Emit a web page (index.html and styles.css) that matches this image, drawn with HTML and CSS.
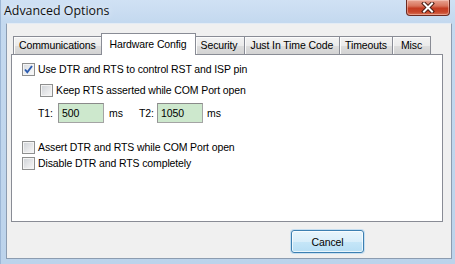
FILE: index.html
```html
<!DOCTYPE html>
<html>
<head>
<meta charset="utf-8">
<title>Advanced Options</title>
<link rel="stylesheet" href="styles.css">
</head>
<body>
<div class="window">
  <div class="titlebar">
    <span class="title">Advanced Options</span>
    <button class="close" aria-label="Close">
      <svg width="14" height="11" viewBox="0 0 14 11">
        <path d="M3 1.5 L11 9.5 M11 1.5 L3 9.5" stroke="#4a1d14" stroke-width="4" stroke-linecap="square"/>
        <path d="M3 1.5 L11 9.5 M11 1.5 L3 9.5" stroke="#ffffff" stroke-width="2" stroke-linecap="square"/>
      </svg>
    </button>
  </div>
  <div class="client">
    <div class="tabctl">
      <div class="tabs">
        <div class="tab first">Communications</div>
        <div class="tab active">Hardware Config</div>
        <div class="tab">Security</div>
        <div class="tab">Just In Time Code</div>
        <div class="tab narrow">Timeouts</div>
        <div class="tab last">Misc</div>
      </div>
      <div class="panel">
        <div class="row first">
          <span class="cb checked">
            <svg width="9" height="9" viewBox="0 0 9 9"><path d="M1 4.5 L3.3 7.2 L8 1" fill="none" stroke="#2c5cb0" stroke-width="1.9"/></svg>
          </span>
          <span>Use DTR and RTS to control RST and ISP pin</span>
        </div>
        <div class="row sub">
          <span class="cb"></span>
          <span>Keep RTS asserted while COM Port open</span>
        </div>
        <div class="trow">
          <span class="tlabel">T1:</span>
          <span class="field">500</span>
          <span class="unit">ms</span>
          <span class="tlabel t2">T2:</span>
          <span class="field f2">1050</span>
          <span class="unit u2">ms</span>
        </div>
        <div class="row assert">
          <span class="cb"></span>
          <span>Assert DTR and RTS while COM Port open</span>
        </div>
        <div class="row">
          <span class="cb"></span>
          <span>Disable DTR and RTS completely</span>
        </div>
      </div>
    </div>
    <div class="buttons">
      <button class="btn">Cancel</button>
    </div>
  </div>
</div>
</body>
</html>
```
FILE: styles.css
```css
html, body {
  margin: 0;
  padding: 0;
  background: #b9d1ea;
}

.window {
  width: 455px;
  height: 264px;
  box-sizing: border-box;
  display: flex;
  flex-direction: column;
  background: linear-gradient(180deg, #d0e1f4 0px, #c4d9ef 22px, #bcd3eb 100%);
  border-left: 1px solid #9db7d6;
  font-family: "Liberation Sans", Arial, sans-serif;
  font-size: 10.5px;
  letter-spacing: -0.12px;
  color: #000;
}

.titlebar {
  height: 23px;
  flex: none;
  display: flex;
  justify-content: space-between;
  align-items: flex-start;
}

.title {
  font-family: "Open Sans", "Noto Sans", sans-serif;
  font-size: 12.4px;
  letter-spacing: 0;
  line-height: 22px;
  padding-left: 3px;
  color: #111;
  text-shadow: 0 0 6px rgba(255, 255, 255, 0.9);
}

.close {
  width: 44px;
  height: 16px;
  margin: 0 5px 0 0;
  padding: 0;
  box-sizing: border-box;
  border: 1px solid #6b2a20;
  border-top: none;
  border-radius: 0 0 4px 4px;
  background: linear-gradient(180deg, #e8a493 0%, #d8735b 40%, #c43c22 55%, #c9472b 80%, #d9765a 100%);
  box-shadow: inset 0 0 0 1px rgba(255, 220, 210, 0.45);
  display: flex;
  align-items: center;
  justify-content: center;
}

.client {
  flex: 1;
  margin: 0 3px 5px 5px;
  background: #f0f0f0;
  border: 1px solid #8c9cb0;
  border-top-color: #e4ecf5;
  display: flex;
  flex-direction: column;
}

.tabctl {
  margin: 9px 8px 0 4px;
  display: flex;
  flex-direction: column;
}

.tabs {
  height: 21px;
  display: flex;
  align-items: flex-end;
  padding-left: 2px;
}

.tab {
  height: 18px;
  box-sizing: border-box;
  padding: 0 6px;
  line-height: 17px;
  border: 1px solid #898c95;
  border-bottom: none;
  border-right: none;
  background: linear-gradient(180deg, #f3f3f3 0%, #ebebeb 50%, #dddddd 51%, #d3d3d3 100%);
  box-shadow: inset 1px 1px 0 #fcfcfc;
  white-space: nowrap;
}

.tab.first {
  padding: 0 5px;
}

.tab.narrow {
  padding: 0 5px;
}

.tab.last {
  border-right: 1px solid #898c95;
  padding: 0 8px;
}

.tab.active {
  height: 22px;
  margin-bottom: -1px;
  padding: 0 8px;
  line-height: 20px;
  background: #fff;
  box-shadow: none;
  border-right: 1px solid #898c95;
  position: relative;
  z-index: 1;
}

.tab.active + .tab {
  border-left: none;
  padding-left: 5px;
}

.panel {
  height: 168px;
  box-sizing: border-box;
  border: 1px solid #898c95;
  background: #fff;
  padding: 6px 10px 0 10px;
}

.row {
  height: 16px;
  display: flex;
  align-items: center;
  white-space: nowrap;
}

.row.sub {
  margin: 5px 0 0 18px;
}

.row.assert {
  margin-top: 16px;
}

.cb {
  width: 13px;
  height: 13px;
  box-sizing: border-box;
  flex: none;
  margin-right: 3px;
  border: 1px solid #8e8f8f;
  background: linear-gradient(135deg, #cdd1d6 0%, #e6e7e9 55%, #f8f8f8 100%);
  box-shadow: inset 0 0 0 1px #f4f4f4;
  display: flex;
  align-items: center;
  justify-content: center;
}

.cb.checked {
  background: linear-gradient(135deg, #d6dae0 0%, #eceef0 55%, #fbfbfb 100%);
}

.trow {
  margin: 5px 0 0 16px;
  height: 20px;
  display: flex;
  align-items: center;
}

.tlabel {
  width: 20px;
}

.tlabel.t2 {
  width: 18px;
}

.field {
  width: 46px;
  height: 20px;
  box-sizing: border-box;
  border: 1px solid #a4a4a4;
  border-top-color: #8a8a8a;
  border-left-color: #949494;
  background: #cde8cd;
  padding-left: 3px;
  line-height: 18px;
}

.unit {
  margin-left: 5px;
  width: 30px;
}

.unit.u2 {
  margin-left: 4px;
}

.buttons {
  display: flex;
  justify-content: flex-end;
  padding: 8px 87px 0 0;
}

.btn {
  width: 73px;
  height: 23px;
  box-sizing: border-box;
  border: 1px solid #3c7fb1;
  border-radius: 3px;
  background: linear-gradient(180deg, #e8f5fc 0%, #d9eefa 50%, #c6e6f8 51%, #b7def4 100%);
  box-shadow: inset 0 0 0 1px rgba(255, 255, 255, 0.7), 0 0 0 1px rgba(120, 190, 240, 0.35);
  font-family: "Liberation Sans", Arial, sans-serif;
  font-size: 10.5px;
  letter-spacing: -0.12px;
  color: #000;
  padding: 0;
}
```
